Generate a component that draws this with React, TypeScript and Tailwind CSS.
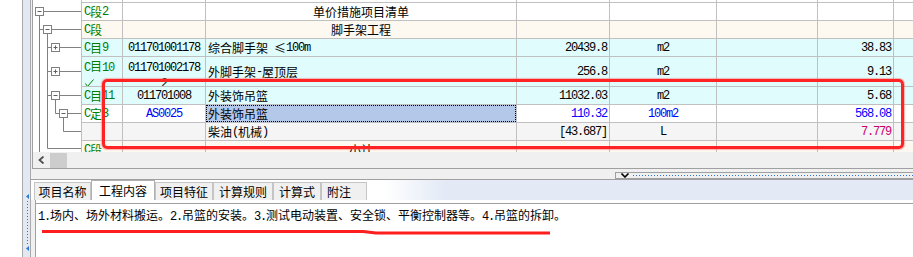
import React from "react";

const MONO = "font-['Liberation_Mono',monospace] tracking-[-1.2px]";

function T({ s }: { s: string }) {
  const parts = s.split(/([\x20-\x7e]+)/);
  return (
    <>
      {parts.map((p, i) =>
        p === "" ? null : /[\x20-\x7e]/.test(p[0]) ? (
          <span key={i} className={MONO}>
            {p}
          </span>
        ) : (
          <span key={i}>{p}</span>
        )
      )}
    </>
  );
}

function Cell({
  w,
  cls = "flex items-center",
  children,
}: {
  w: string;
  cls?: string;
  children?: React.ReactNode;
}) {
  return (
    <div
      className={`${w} shrink-0 h-full border-l border-[#c0c0c0] overflow-hidden whitespace-pre ${cls}`}
    >
      {children}
    </div>
  );
}

function Row({
  h,
  bg,
  children,
}: {
  h: string;
  bg: string;
  children?: React.ReactNode;
}) {
  return (
    <div className={`${h} ${bg} shrink-0 flex border-b border-[#c0c0c0]`}>
      {children}
    </div>
  );
}

function Rest({ n = 5 }: { n?: number }) {
  const ws = ["w-[93px]", "w-[107px]", "w-[101px]", "w-[76px]", "flex-1"];
  return (
    <>
      {ws.slice(5 - n).map((w, i) => (
        <Cell key={i} w={w} />
      ))}
    </>
  );
}

function Box({ x, y, plus }: { x: number; y: number; plus?: boolean }) {
  return (
    <g>
      <rect x={x} y={y} width="8" height="8" fill="#ffffff" stroke="#808080" />
      <path d={`M${x + 2} ${y + 4}H${x + 6}`} stroke="#606060" />
      {plus && <path d={`M${x + 4} ${y + 2}V${y + 6}`} stroke="#606060" />}
    </g>
  );
}

function Tree() {
  return (
    <svg width="48" height="152" className="shrink-0 block bg-white">
      <path
        fill="none"
        stroke="#808080"
        strokeWidth="1"
        d="M6.5 15.5V152 M10.5 11.5H48 M6.5 29.5H10.5 M18.5 29.5H48 M14.5 33.5V148.5H48 M14.5 47.5H18.5 M26.5 47.5H48 M14.5 71.5H18.5 M26.5 71.5H48 M14.5 95.5H18.5 M26.5 95.5H48 M22.5 99.5V113.5H26.5 M34.5 113.5H48 M30.5 117.5V131.5H48"
      />
      <Box x={2.5} y={7.5} />
      <Box x={10.5} y={25.5} />
      <Box x={18.5} y={43.5} plus />
      <Box x={18.5} y={67.5} plus />
      <Box x={18.5} y={91.5} />
      <Box x={26.5} y={109.5} />
    </svg>
  );
}

const G = "text-[#008000]";
const B = "text-[#0000ff]";

export default function App() {
  return (
    <div className="w-[913px] h-[257px] overflow-hidden relative flex bg-white text-black text-[12px] leading-[14px] font-['Noto_Sans_CJK_SC','Noto_Sans',sans-serif]">
      <div className="w-[22px] shrink-0 bg-white" />
      <div className="w-[9px] shrink-0 border-x border-[#a9a9a9] bg-[#e3e9f2] flex flex-col">
        <div className="h-[194px] shrink-0" />
        <svg width="7" height="58" className="block">
          <polygon points="3,2.5 6,0 6,5" fill="#2a78d6" />
          <line x1="4.5" y1="7" x2="4.5" y2="51" stroke="#2a78d6" strokeDasharray="1 2" />
          <polygon points="3,54.5 6,52 6,57" fill="#2a78d6" />
        </svg>
      </div>

      <div className="flex-1 min-w-0 flex flex-col bg-[#f0f0f0]">
        {/* grid */}
        <div className="ml-[1px] h-[169px] shrink-0 border-l border-b border-[#a0a0a0] bg-white flex flex-col">
          <div className="h-[152px] shrink-0 flex overflow-hidden">
            <Tree />
            <div className="flex-1 min-w-0 flex flex-col">
              <Row h="h-[3px]" bg="bg-white">
                <Cell w="w-[41px]" />
                <Cell w="w-[83px]" />
                <Cell w="w-[311px]" />
                <Rest />
              </Row>
              <Row h="h-[18px]" bg="bg-white">
                <Cell w="w-[41px]" cls={`flex items-center pl-[2px] ${G}`}>
                  <T s="C段2" />
                </Cell>
                <Cell w="w-[83px]" />
                <Cell w="w-[311px]" cls="flex items-center justify-center">
                  单价措施项目清单
                </Cell>
                <Rest />
              </Row>
              <Row h="h-[18px]" bg="bg-[#fdf8f0]">
                <Cell w="w-[41px]" cls={`flex items-center pl-[2px] ${G}`}>
                  <T s="C段" />
                </Cell>
                <Cell w="w-[83px]" />
                <Cell w="w-[311px]" cls="flex items-center justify-center">
                  脚手架工程
                </Cell>
                <Rest />
              </Row>
              <Row h="h-[18px]" bg="bg-[#e0fcfc]">
                <Cell w="w-[41px]" cls={`flex items-center pl-[2px] ${G}`}>
                  <T s="C目9" />
                </Cell>
                <Cell w="w-[83px]" cls="flex items-center justify-center">
                  <T s="011701001178" />
                </Cell>
                <Cell w="w-[311px]" cls="flex items-center pl-[2px]">
                  综合脚手架<span className={MONO}> </span>
                  <span className="inline-block w-[12px] text-center">≤</span>
                  <span className={MONO}>100m</span>
                </Cell>
                <Cell w="w-[93px]" cls="flex items-center justify-end pr-[2px]">
                  <T s="20439.8" />
                </Cell>
                <Cell w="w-[107px]" cls="flex items-center justify-center">
                  <T s="m2" />
                </Cell>
                <Cell w="w-[101px]" />
                <Cell w="w-[76px]" cls="flex items-center justify-end pr-[2px]">
                  <T s="38.83" />
                </Cell>
                <Cell w="flex-1" />
              </Row>
              <Row h="h-[30px]" bg="bg-[#e0fcfc]">
                <Cell
                  w="w-[41px]"
                  cls={`flex flex-col items-start pl-[2px] pt-[2px] leading-[13px] ${G}`}
                >
                  <div>
                    <T s="C目10" />
                  </div>
                  <svg width="9" height="8" className="block ml-[1px] mt-[4px]">
                    <polyline
                      points="0.5,4.5 2.5,7.5 8.5,0.5"
                      fill="none"
                      stroke="#008000"
                      strokeWidth="1"
                    />
                  </svg>
                </Cell>
                <Cell
                  w="w-[83px]"
                  cls="flex flex-col items-center pt-[2px] leading-[13px]"
                >
                  <div>
                    <T s="011701002178" />
                  </div>
                  <div>
                    <T s="2" />
                  </div>
                </Cell>
                <Cell w="w-[311px]" cls="flex items-center pl-[2px]">
                  <T s="外脚手架-屋顶层" />
                </Cell>
                <Cell w="w-[93px]" cls="flex items-center justify-end pr-[2px]">
                  <T s="256.8" />
                </Cell>
                <Cell w="w-[107px]" cls="flex items-center justify-center">
                  <T s="m2" />
                </Cell>
                <Cell w="w-[101px]" />
                <Cell w="w-[76px]" cls="flex items-center justify-end pr-[2px]">
                  <T s="9.13" />
                </Cell>
                <Cell w="flex-1" />
              </Row>
              <Row h="h-[18px]" bg="bg-[#e0fcfc]">
                <Cell w="w-[41px]" cls={`flex items-center pl-[2px] ${G}`}>
                  <T s="C目11" />
                </Cell>
                <Cell w="w-[83px]" cls="flex items-center justify-center">
                  <T s="011701008" />
                </Cell>
                <Cell w="w-[311px]" cls="flex items-center pl-[2px]">
                  外装饰吊篮
                </Cell>
                <Cell w="w-[93px]" cls="flex items-center justify-end pr-[2px]">
                  <T s="11032.03" />
                </Cell>
                <Cell w="w-[107px]" cls="flex items-center justify-center">
                  <T s="m2" />
                </Cell>
                <Cell w="w-[101px]" />
                <Cell w="w-[76px]" cls="flex items-center justify-end pr-[2px]">
                  <T s="5.68" />
                </Cell>
                <Cell w="flex-1" />
              </Row>
              <Row h="h-[18px]" bg="bg-white">
                <Cell w="w-[41px]" cls={`flex items-center pl-[2px] ${G}`}>
                  <T s="C定3" />
                </Cell>
                <Cell w="w-[83px]" cls={`flex items-center justify-center ${B}`}>
                  <T s="AS0025" />
                </Cell>
                <Cell w="w-[311px]" cls="flex">
                  <div className="flex-1 h-full bg-[#b4c8ea] border border-dotted border-black flex items-center pl-[1px]">
                    外装饰吊篮
                  </div>
                </Cell>
                <Cell w="w-[93px]" cls={`flex items-center justify-end pr-[2px] ${B}`}>
                  <T s="110.32" />
                </Cell>
                <Cell w="w-[107px]" cls={`flex items-center justify-center ${B}`}>
                  <T s="100m2" />
                </Cell>
                <Cell w="w-[101px]" />
                <Cell w="w-[76px]" cls={`flex items-center justify-end pr-[2px] ${B}`}>
                  <T s="568.08" />
                </Cell>
                <Cell w="flex-1" />
              </Row>
              <Row h="h-[18px]" bg="bg-[#f5f5f5]">
                <Cell w="w-[41px]" />
                <Cell w="w-[83px]" />
                <Cell w="w-[311px]" cls="flex items-center pl-[2px]">
                  <T s="柴油(机械)" />
                </Cell>
                <Cell w="w-[93px]" cls="flex items-center justify-end pr-[2px]">
                  <T s="[43.687]" />
                </Cell>
                <Cell w="w-[107px]" cls="flex items-center justify-center">
                  <T s="L" />
                </Cell>
                <Cell w="w-[101px]" />
                <Cell w="w-[76px]" cls="flex items-center justify-end pr-[2px] text-[#c8006e]">
                  <T s="7.779" />
                </Cell>
                <Cell w="flex-1" />
              </Row>
              <Row h="h-[18px]" bg="bg-[#fdf8f0]">
                <Cell w="w-[41px]" cls={`flex items-center pl-[2px] ${G}`}>
                  <T s="C段" />
                </Cell>
                <Cell w="w-[83px]" />
                <Cell w="w-[311px]" cls="flex items-center justify-center">
                  小计
                </Cell>
                <Rest />
              </Row>
            </div>
          </div>
          {/* horizontal scrollbar */}
          <div className="h-[16px] shrink-0 bg-[#f0f0f0] flex items-center">
            <svg width="7" height="8" className="block ml-[5px]">
              <polyline points="5.5,0.5 1.5,4 5.5,7.5" fill="none" stroke="#505050" strokeWidth="1.8" />
            </svg>
            <div className="ml-[5px] w-[17px] h-[15px] bg-[#cdcdcd]" />
          </div>
        </div>

        {/* splitter strip */}
        <div className="h-[11px] shrink-0 border-b border-[#a0a0a0] flex">
          <div className="ml-[584px] mt-[3px] h-[7px] flex-1 border-t border-l border-b border-[#a0a0a0] flex items-center">
            <svg width="9" height="5" className="block ml-[5px] shrink-0">
              <polyline points="0.5,0.5 4,4 7.5,0.5" fill="none" stroke="#000000" strokeWidth="1.6" />
            </svg>
            <svg height="3" className="block flex-1 ml-[3px]">
              <line x1="0" y1="1.5" x2="100%" y2="1.5" stroke="#2a78d6" strokeDasharray="1 2" />
            </svg>
          </div>
        </div>

        {/* tabs */}
        <div className="h-[20px] shrink-0 flex items-end pl-[3px] bg-linear-to-r from-white from-[40%] to-[#e3eaf6] to-[47%]">
          <div className="w-[57px] h-[18px] border border-b-0 border-[#c4c4c4] bg-[#f0f0f0] flex items-center justify-center">
            项目名称
          </div>
          <div className="w-[64px] h-[20px] border border-b-0 border-[#b0b0b0] bg-white flex items-center justify-center">
            工程内容
          </div>
          <div className="w-[58px] h-[18px] border border-b-0 border-[#c4c4c4] bg-[#f0f0f0] flex items-center justify-center">
            项目特征
          </div>
          <div className="w-[60px] h-[18px] border border-b-0 border-[#c4c4c4] bg-[#f0f0f0] flex items-center justify-center">
            计算规则
          </div>
          <div className="w-[48px] h-[18px] border border-b-0 border-[#c4c4c4] bg-[#f0f0f0] flex items-center justify-center">
            计算式
          </div>
          <div className="w-[46px] h-[18px] border border-b-0 border-[#c4c4c4] bg-[#f0f0f0] flex items-center pl-[5px]">
            附注
          </div>
        </div>

        {/* content */}
        <div className="ml-[4px] flex-1 bg-white border-l border-[#a0a0a0] flex flex-col">
          <div className="h-[3px] shrink-0" />
          <div className="flex-1 border-t border-[#a0a0a0] pl-[2px] pt-[3px] leading-[16px] whitespace-nowrap">
            <T s="1.场内、场外材料搬运。2.吊篮的安装。3.测试电动装置、安全锁、平衡控制器等。4.吊篮的拆卸。" />
          </div>
        </div>
      </div>

      {/* annotations */}
      <div className="absolute left-[102px] top-[79px] w-[802px] h-[70px] border-[3px] border-[#ff2323] rounded-[5px] shadow-[0_0_1px_1px_rgba(255,90,90,0.45)] pointer-events-none" />
      <svg width="514" height="10" className="absolute left-[40px] top-[228px] pointer-events-none">
        <polyline
          points="2,3.5 323,3.5 336,5 510,5"
          fill="none"
          stroke="#ff1e1e"
          strokeWidth="3"
        />
      </svg>
    </div>
  );
}
